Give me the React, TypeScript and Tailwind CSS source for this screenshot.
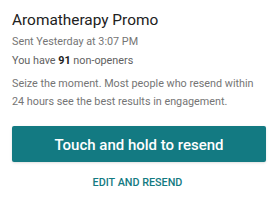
import React from "react";

export default function App() {
  return (
    <div className="w-[275px] h-[207px] bg-white px-[12px] pt-[10px]" style={{ fontFamily: "Roboto, sans-serif" }}>
      <div className="text-[15.4px] leading-[20px] text-[#212121]">Aromatherapy Promo</div>
      <div className="mt-[4px] text-[10.8px] leading-[16px] text-[#757575]">Sent Yesterday at 3:07 PM</div>
      <div className="mt-[3px] text-[10.8px] leading-[16px] text-[#616161]">
        You have <span className="font-bold text-[#212121]">91</span> non-openers
      </div>
      <div className="mt-[6px] text-[10.8px] leading-[18px] text-[#757575]">
        Seize the moment. Most people who resend within 24 hours see the best results in engagement.
      </div>
      <button className="mt-[15px] w-[254px] h-[36px] rounded-[2px] bg-[#137a82] text-white text-[15px] font-medium flex items-center justify-center pt-[2px] shadow-sm">
        Touch and hold to resend
      </button>
      <div className="mt-[13px] text-center text-[10.8px] leading-[16px] font-medium text-[#137a82]">
        EDIT AND RESEND
      </div>
    </div>
  );
}
